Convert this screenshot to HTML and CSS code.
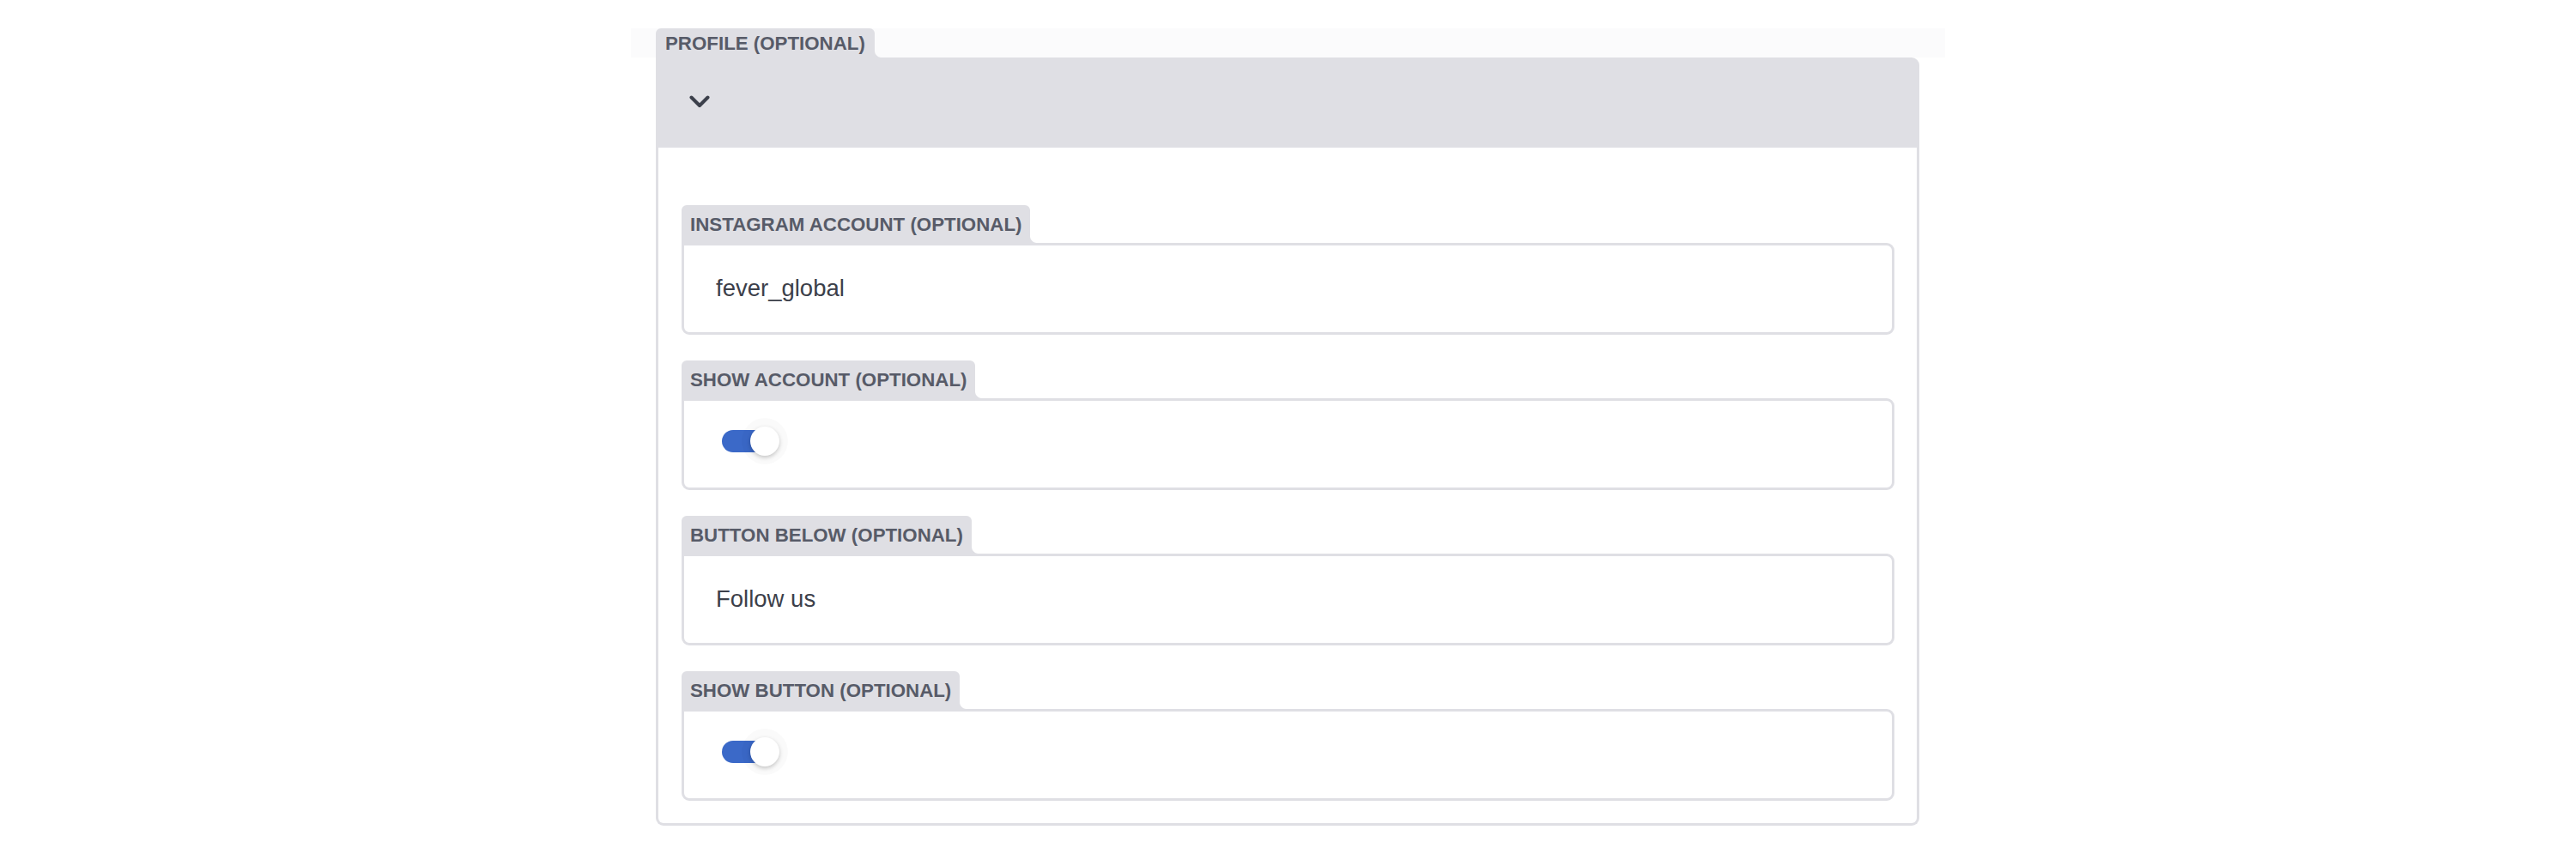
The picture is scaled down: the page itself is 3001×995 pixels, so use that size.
FILE: index.html
```html
<!DOCTYPE html>
<html lang="en">
<head>
<meta charset="utf-8">
<title>Profile</title>
<link rel="stylesheet" href="styles.css">
</head>
<body>
<div class="wrap">
  <div class="tabrow">
    <div class="tab">PROFILE (OPTIONAL)</div>
  </div>
  <div class="section">
    <div class="section-head">
      <svg class="chevron" width="24" height="15" viewBox="0 0 24 15" aria-hidden="true">
        <path d="M2.5 2.5 L12 12 L21.5 2.5" fill="none" stroke="#3c404b" stroke-width="4" stroke-linecap="round" stroke-linejoin="round"/>
      </svg>
    </div>
    <div class="section-body">
      <div class="group">
        <div class="tab small">INSTAGRAM ACCOUNT (OPTIONAL)</div>
        <div class="field"><span class="value">fever_global</span></div>
      </div>
      <div class="group">
        <div class="tab small">SHOW ACCOUNT (OPTIONAL)</div>
        <div class="field"><span class="toggle"><span class="knob"></span></span></div>
      </div>
      <div class="group">
        <div class="tab small">BUTTON BELOW (OPTIONAL)</div>
        <div class="field"><span class="value">Follow us</span></div>
      </div>
      <div class="group">
        <div class="tab small">SHOW BUTTON (OPTIONAL)</div>
        <div class="field"><span class="toggle"><span class="knob"></span></span></div>
      </div>
    </div>
  </div>
</div>
</body>
</html>
```

FILE: styles.css
```css
html, body {
  margin: 0;
  padding: 0;
  background: #ffffff;
  font-family: "Liberation Sans", Arial, Helvetica, sans-serif;
}

.wrap {
  width: 1531px;
  margin: 33px auto 0;
}

.tabrow {
  display: flex;
  height: 34px;
  padding-left: 29px;
  background: #fbfbfc;
  align-items: flex-end;
}

.tab {
  position: relative;
  display: inline-block;
  height: 34px;
  line-height: 36px;
  padding: 0 11px 0 11px;
  background: #dfdfe4;
  color: #575b68;
  font-size: 22.3px;
  font-weight: 700;
  border-radius: 6px 6px 0 0;
  white-space: nowrap;
}

.tab::after {
  content: "";
  position: absolute;
  left: 100%;
  bottom: 0;
  width: 8px;
  height: 8px;
  background: radial-gradient(circle at 100% 0, rgba(223, 223, 228, 0) 7.5px, #dfdfe4 8.5px);
}

.section {
  margin-left: 29px;
  width: 1472px;
}

.section-head {
  height: 105px;
  background: #dfdfe4;
  border-radius: 0 9px 0 0;
  display: flex;
  align-items: center;
  padding-left: 39px;
}

.chevron {
  display: block;
  margin-top: -3px;
}

.section-body {
  border: 3px solid #dfdfe4;
  border-top: none;
  border-radius: 0 0 9px 9px;
  padding: 67px 26px 26px 27px;
  display: flex;
  flex-direction: column;
  gap: 30px;
}

.group {
  display: flex;
  flex-direction: column;
  align-items: flex-start;
}

.tab.small {
  height: 44px;
  line-height: 45px;
  padding: 0 10px;
}

.field {
  align-self: stretch;
  box-sizing: border-box;
  height: 107px;
  border: 3px solid #dfdfe4;
  border-radius: 0 9px 9px 9px;
  display: flex;
  align-items: center;
  padding-left: 37px;
}

.value {
  font-size: 27.5px;
  color: #3c404a;
  margin-top: -1px;
}

.toggle {
  position: relative;
  display: block;
  width: 51px;
  height: 26px;
  margin-left: 7px;
  margin-top: -7px;
  border-radius: 13px;
  background: #3b69c8;
}

.knob {
  position: absolute;
  right: -16px;
  top: -4px;
  width: 34px;
  height: 34px;
  border-radius: 50%;
  background: #ffffff;
  box-shadow: 0 2px 5px rgba(0, 0, 0, 0.22), 0 0 0 10px rgba(0, 0, 0, 0.018);
}
```
